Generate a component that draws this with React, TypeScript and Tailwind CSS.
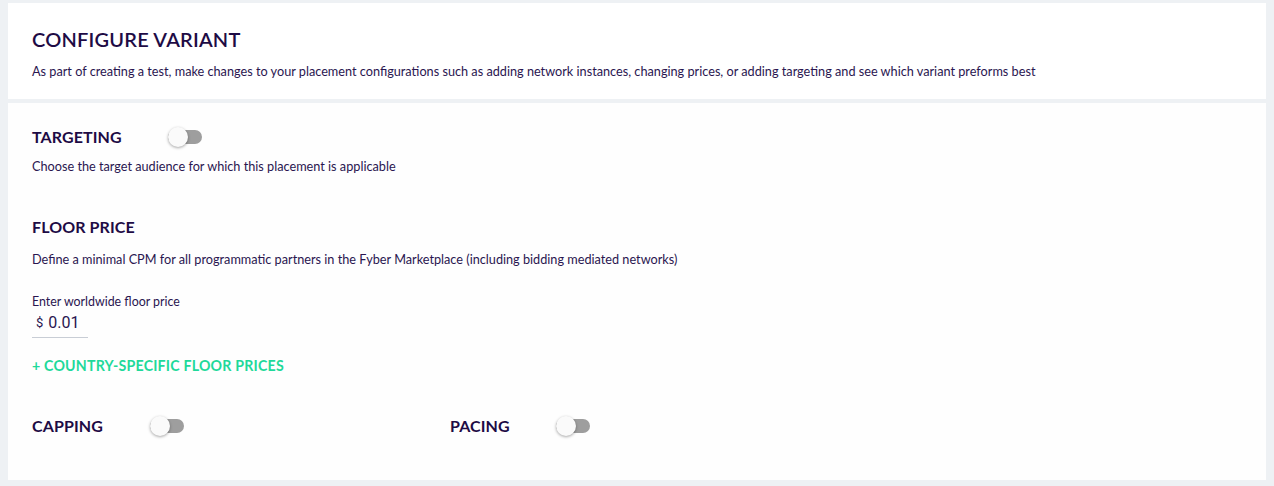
import type { ReactNode } from 'react';

const Toggle = () => (
  <div className="relative h-5 w-[34px] shrink-0">
    <div className="absolute top-[3px] left-0 h-[14px] w-[34px] rounded-full bg-[#9e9e9e]" />
    <div className="absolute top-0 left-0 h-5 w-5 rounded-full bg-[#fafafa] shadow-[0_1px_3px_rgba(0,0,0,0.35)]" />
  </div>
);

const Heading = ({ children }: { readonly children: ReactNode }) => (
  <h2 className="font-bold text-[16px] text-[#1e0b45] leading-5 tracking-[0.1px]">{children}</h2>
);

const Hint = ({ children }: { readonly children: ReactNode }) => (
  <p className="text-[12.7px] text-[#2a1650] leading-4">{children}</p>
);

const App = () => (
  <div className="flex min-h-[486px] flex-col gap-1 bg-[#eef1f4] px-2 pt-[3px] pb-[6px] font-['Lato',sans-serif]">
    <section className="h-[96px] bg-white px-6 pt-[24px]">
      <h1 className="font-semibold text-[20px] text-[#1e0b45] leading-6 tracking-[0.2px]">CONFIGURE VARIANT</h1>
      <p className="mt-[12px] text-[12.7px] text-[#2a1650] leading-4">
        As part of creating a test, make changes to your placement configurations such as adding network instances,
        changing prices, or adding targeting and see which variant preforms best
      </p>
    </section>

    <section className="h-[377px] bg-[#fefefe] px-6 pt-[24px]">
      <div className="flex items-center">
        <div className="w-[136px]">
          <Heading>TARGETING</Heading>
        </div>
        <Toggle />
      </div>
      <div className="mt-[11px]">
        <Hint>Choose the target audience for which this placement is applicable</Hint>
      </div>

      <div className="mt-[43px]">
        <Heading>FLOOR PRICE</Heading>
      </div>
      <div className="mt-[14px]">
        <Hint>Define a minimal CPM for all programmatic partners in the Fyber Marketplace (including bidding mediated networks)</Hint>
      </div>

      <div className="mt-[27px]">
        <p className="text-[12.4px] text-[#2a1650] leading-4">Enter worldwide floor price</p>
        <div className="mt-[2px] flex h-[26px] w-[56px] items-center gap-[5px] border-[#c8cdd5] border-b pb-1 pl-1 font-['Roboto',sans-serif] text-[#2a1650]">
          <span className="text-[13px]">$</span>
          <span className="text-[16px]">0.01</span>
        </div>
      </div>

      <button type="button" className="mt-[20px] block font-bold text-[14.2px] text-[#1fd99a] leading-4 tracking-[0.2px]">
        + COUNTRY-SPECIFIC FLOOR PRICES
      </button>

      <div className="mt-[42px] flex items-center">
        <div className="flex w-[418px] items-center">
          <div className="w-[118px]">
            <Heading>CAPPING</Heading>
          </div>
          <Toggle />
        </div>
        <div className="flex items-center">
          <div className="w-[106px]">
            <Heading>PACING</Heading>
          </div>
          <Toggle />
        </div>
      </div>
    </section>
  </div>
);

export default App;
